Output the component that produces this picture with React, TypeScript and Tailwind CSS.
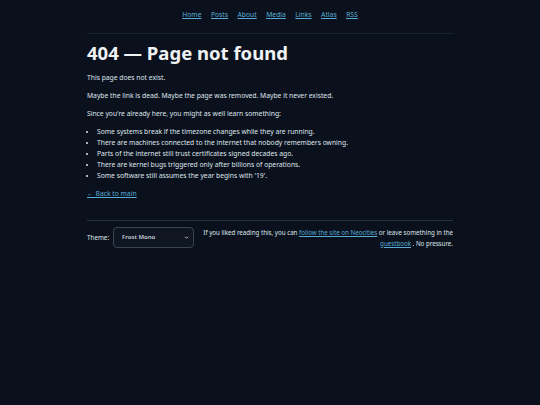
import React from "react";

const facts = [
  "Some systems break if the timezone changes while they are running.",
  "There are machines connected to the internet that nobody remembers owning.",
  "Parts of the internet still trust certificates signed decades ago.",
  "There are kernel bugs triggered only after billions of operations.",
  "Some software still assumes the year begins with '19'.",
];

const navItems = ["Home", "Posts", "About", "Media", "Links", "Atlas", "RSS"];

export default function App() {
  return (
    <div
      className="min-h-[405px] w-full bg-[#0b111c] text-[#dfe5ec]"
      style={{ fontFamily: '"Noto Sans", "Open Sans", sans-serif' }}
    >
      <div className="mx-auto w-[366px]">
        <nav className="flex justify-center gap-[9.5px] pt-[8.5px] pb-[13.5px] text-[6.75px] leading-[11px]">
          {navItems.map((n) => (
            <a key={n} className="text-[#58acd6] underline">
              {n}
            </a>
          ))}
        </nav>
        <div className="border-t border-[#1c2430]" />
        <h1 className="mt-[6px] text-[18.5px] font-bold leading-[25px] text-[#f0f3f6]">
          404 — Page not found
        </h1>
        <div className="text-[6.75px] leading-[11.1px]">
          <p className="mt-[7px]">This page does not exist.</p>
          <p className="mt-[7px]">
            Maybe the link is dead. Maybe the page was removed. Maybe it never existed.
          </p>
          <p className="mt-[7px]">Since you're already here, you might as well learn something:</p>
          <ul className="mt-[6.5px] list-disc pl-[10px]">
            {facts.map((f) => (
              <li key={f}>{f}</li>
            ))}
          </ul>
          <p className="mt-[7px]">
            <a className="text-[#58acd6] underline">← Back to main</a>
          </p>
        </div>
        <div className="mt-[20.5px] border-t border-[#2a323d]" />
        <div className="flex items-center justify-between pt-[6px]">
          <div className="flex items-center gap-[4px] text-[6.3px]">
            <span>Theme:</span>
            <div className="flex h-[21px] w-[81px] items-center justify-between rounded-[4px] border border-[#3a4452] bg-[#0f1622] pl-[8px] pr-[4px] text-[6px] font-semibold text-[#c9d1da]">
              <span>Frost Mono</span>
              <svg width="5" height="5" viewBox="0 0 10 10">
                <path d="M2 3.5 L5 6.5 L8 3.5" stroke="#c9d1da" strokeWidth="1.8" fill="none" />
              </svg>
            </div>
          </div>
          <p className="whitespace-nowrap text-right text-[6.2px] leading-[11px]">
            If you liked reading this, you can{" "}
            <a className="text-[#58acd6] underline">follow the site on Neocities</a> or leave
            something in the
            <br />
            <a className="text-[#58acd6] underline">guestbook</a> . No pressure.
          </p>
        </div>
      </div>
    </div>
  );
}
